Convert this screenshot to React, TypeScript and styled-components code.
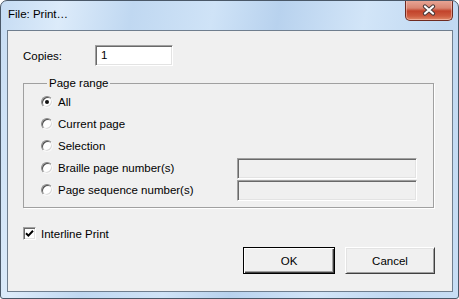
import styled, { createGlobalStyle } from 'styled-components';

const GlobalStyle = createGlobalStyle`
  html, body { margin: 0; padding: 0; background: #fff; }
  body { font-family: "Liberation Sans", Arial, sans-serif; font-size: 11.5px; color: #000; }
`;

const Window = styled.div`
  box-sizing: border-box;
  width: 459px;
  height: 299px;
  display: flex;
  flex-direction: column;
  border: 1px solid #4a5868;
  border-radius: 7px 7px 3px 3px;
  background: linear-gradient(100deg, #c6dcf3 0%, #dcebfa 12%, #c0d8f1 26%, #cfe3f7 42%, #b8d2ee 55%, #d2e5f8 72%, #c0d8f1 88%, #c8def5 100%);
  padding: 0 5px 6px 6px;
  overflow: hidden;
`;

const TitleBar = styled.div`
  height: 29px;
  display: flex;
  justify-content: space-between;
  align-items: flex-start;
`;

const Title = styled.div`
  padding: 7px 0 0 1px;
  font-size: 11.5px;
  color: #000;
`;

const CloseButton = styled.div`
  box-sizing: border-box;
  width: 48px;
  height: 21px;
  margin-top: -1px;
  border: 1px solid #6e2a20;
  border-top: none;
  border-radius: 0 0 5px 5px;
  background: linear-gradient(180deg, #e9a899 0%, #d98672 40%, #c2432b 55%, #cd5a3e 80%, #e08a68 100%);
  box-shadow: inset 0 0 0 1px rgba(255, 210, 200, 0.5);
  display: grid;
  place-items: center;
`;

const Content = styled.div`
  flex: 1;
  background: #f0f0f0;
  border: 1px solid #6f7e8e;
  display: flex;
  flex-direction: column;
  padding: 0 17px 0 15px;
`;

const CopiesRow = styled.div`
  display: flex;
  align-items: center;
  margin-top: 14px;
`;

const Label = styled.span<{ $width?: number }>`
  width: ${({ $width }) => ($width ? `${$width}px` : 'auto')};
  white-space: nowrap;
`;

const TextBox = styled.div<{ $width: number; $disabled?: boolean }>`
  box-sizing: border-box;
  width: ${({ $width }) => $width}px;
  height: 21px;
  border: 1px solid;
  border-color: #a0a0a0 #fff #fff #a0a0a0;
  box-shadow: inset 1px 1px 0 #696969, inset -1px -1px 0 #e3e3e3;
  background: ${({ $disabled }) => ($disabled ? '#f0f0f0' : '#fff')};
  padding: 3px 0 0 5px;
`;

const Group = styled.fieldset`
  margin: 9px 1px 0 0;
  padding: 0 16px 6px 17px;
  border: 1px solid #a0a0a0;
  box-shadow: 1px 1px 0 #fff;
  min-width: 0;
`;

const Legend = styled.legend`
  margin-left: 6px;
  padding: 0 2px;
  line-height: 16px;
`;

const OptionRow = styled.div`
  height: 22px;
  display: flex;
  align-items: center;
`;

const OptionLabel = styled.label`
  flex: 1;
  display: flex;
  align-items: center;
  gap: 5px;
`;

const Radio = styled.span<{ $checked?: boolean }>`
  box-sizing: border-box;
  position: relative;
  width: 12px;
  height: 12px;
  border-radius: 50%;
  border: 1px solid;
  border-color: #8a8a8a #f8f8f8 #f8f8f8 #8a8a8a;
  box-shadow: inset 1px 1px 0 #505050, inset -1px -1px 0 #d8d8d8;
  background: #fff;
  &::after {
    content: '';
    display: ${({ $checked }) => ($checked ? 'block' : 'none')};
    position: absolute;
    left: 3px;
    top: 3px;
    width: 4px;
    height: 4px;
    border-radius: 50%;
    background: #111;
  }
`;

const CheckRow = styled.label`
  display: flex;
  align-items: center;
  gap: 5px;
  margin-top: 19px;
`;

const CheckBox = styled.span`
  box-sizing: border-box;
  width: 13px;
  height: 13px;
  border: 1px solid;
  border-color: #a0a0a0 #fff #fff #a0a0a0;
  box-shadow: inset 1px 1px 0 #696969, inset -1px -1px 0 #e3e3e3;
  background: #fff;
  display: grid;
  place-items: center;
`;

const Buttons = styled.div`
  display: flex;
  justify-content: flex-end;
  gap: 10px;
  margin-top: 7px;
`;

const Button = styled.button<{ $default?: boolean; $width: number }>`
  box-sizing: border-box;
  width: ${({ $width }) => $width}px;
  height: 27px;
  font: inherit;
  color: #000;
  background: #f0f0f0;
  border: 1px solid;
  border-color: ${({ $default }) => ($default ? '#000' : '#fff #404040 #404040 #fff')};
  box-shadow: ${({ $default }) =>
    $default
      ? 'inset 1px 1px 0 #fff, inset -1px -1px 0 #404040, inset -2px -2px 0 #a0a0a0'
      : 'inset 1px 1px 0 #e3e3e3, inset -1px -1px 0 #a0a0a0'};
  padding: 0;
`;

const options = [
  { label: 'All', checked: true, field: false },
  { label: 'Current page', checked: false, field: false },
  { label: 'Selection', checked: false, field: false },
  { label: 'Braille page number(s)', checked: false, field: true },
  { label: 'Page sequence number(s)', checked: false, field: true },
];

export default function App() {
  return (
    <>
      <GlobalStyle />
      <Window>
        <TitleBar>
          <Title>File: Print…</Title>
          <CloseButton>
            <svg width="14" height="12" viewBox="0 0 14 12" aria-hidden>
              <path d="M3 2.5L11 9.5M11 2.5L3 9.5" stroke="#4a3a3a" strokeWidth="4.2" strokeLinecap="round" />
              <path d="M3 2.5L11 9.5M11 2.5L3 9.5" stroke="#fff" strokeWidth="2.2" strokeLinecap="round" />
            </svg>
          </CloseButton>
        </TitleBar>
        <Content>
          <CopiesRow>
            <Label $width={72}>Copies:</Label>
            <TextBox $width={78}>1</TextBox>
          </CopiesRow>

          <Group>
            <Legend>Page range</Legend>
            {options.map((o) => (
              <OptionRow key={o.label}>
                <OptionLabel>
                  <Radio $checked={o.checked} />
                  {o.label}
                </OptionLabel>
                {o.field && <TextBox $width={180} $disabled />}
              </OptionRow>
            ))}
          </Group>

          <CheckRow>
            <CheckBox>
              <svg width="9" height="9" viewBox="0 0 9 9" aria-hidden>
                <path d="M1 4.2L3.4 6.6L8 1.8" stroke="#000" strokeWidth="2" fill="none" />
              </svg>
            </CheckBox>
            Interline Print
          </CheckRow>

          <Buttons>
            <Button $default $width={92}>OK</Button>
            <Button $width={90}>Cancel</Button>
          </Buttons>
        </Content>
      </Window>
    </>
  );
}
